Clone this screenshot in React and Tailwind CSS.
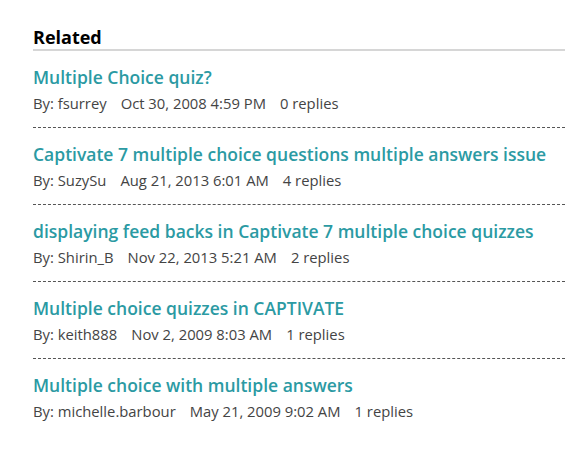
const items = [
  {
    title: "Multiple Choice quiz?",
    by: "fsurrey",
    date: "Oct 30, 2008 4:59 PM",
    replies: 0,
  },
  {
    title: "Captivate 7 multiple choice questions multiple answers issue",
    by: "SuzySu",
    date: "Aug 21, 2013 6:01 AM",
    replies: 4,
  },
  {
    title: "displaying feed backs in Captivate 7 multiple choice quizzes",
    by: "Shirin_B",
    date: "Nov 22, 2013 5:21 AM",
    replies: 2,
  },
  {
    title: "Multiple choice quizzes in CAPTIVATE",
    by: "keith888",
    date: "Nov 2, 2009 8:03 AM",
    replies: 1,
  },
  {
    title: "Multiple choice with multiple answers",
    by: "michelle.barbour",
    date: "May 21, 2009 9:02 AM",
    replies: 1,
  },
];

export default function App() {
  return (
    <div className="h-[465px] w-[565px] overflow-hidden bg-white pl-[33px] pt-[28px] font-['Open_Sans',sans-serif]">
      <h2 className="border-b-2 border-[#d6d6d6] pb-[2px] text-[18px] font-bold leading-[19px] text-black">
        Related
      </h2>
      <ul>
        {items.map((it, i) => (
          <li
            key={i}
            className={
              "pt-[15px] pb-[14px] " +
              (i < items.length - 1 ? "border-b border-dashed border-[#555]" : "")
            }
          >
            <a className="block text-[17.5px] font-semibold leading-[22px] text-[#2b9aa3]">
              {it.title}
            </a>
            <div className="mt-[5px] flex gap-[14px] text-[14.8px] leading-[20px] text-[#444]">
              <span>By: {it.by}</span>
              <span>{it.date}</span>
              <span>{it.replies} replies</span>
            </div>
          </li>
        ))}
      </ul>
    </div>
  );
}
